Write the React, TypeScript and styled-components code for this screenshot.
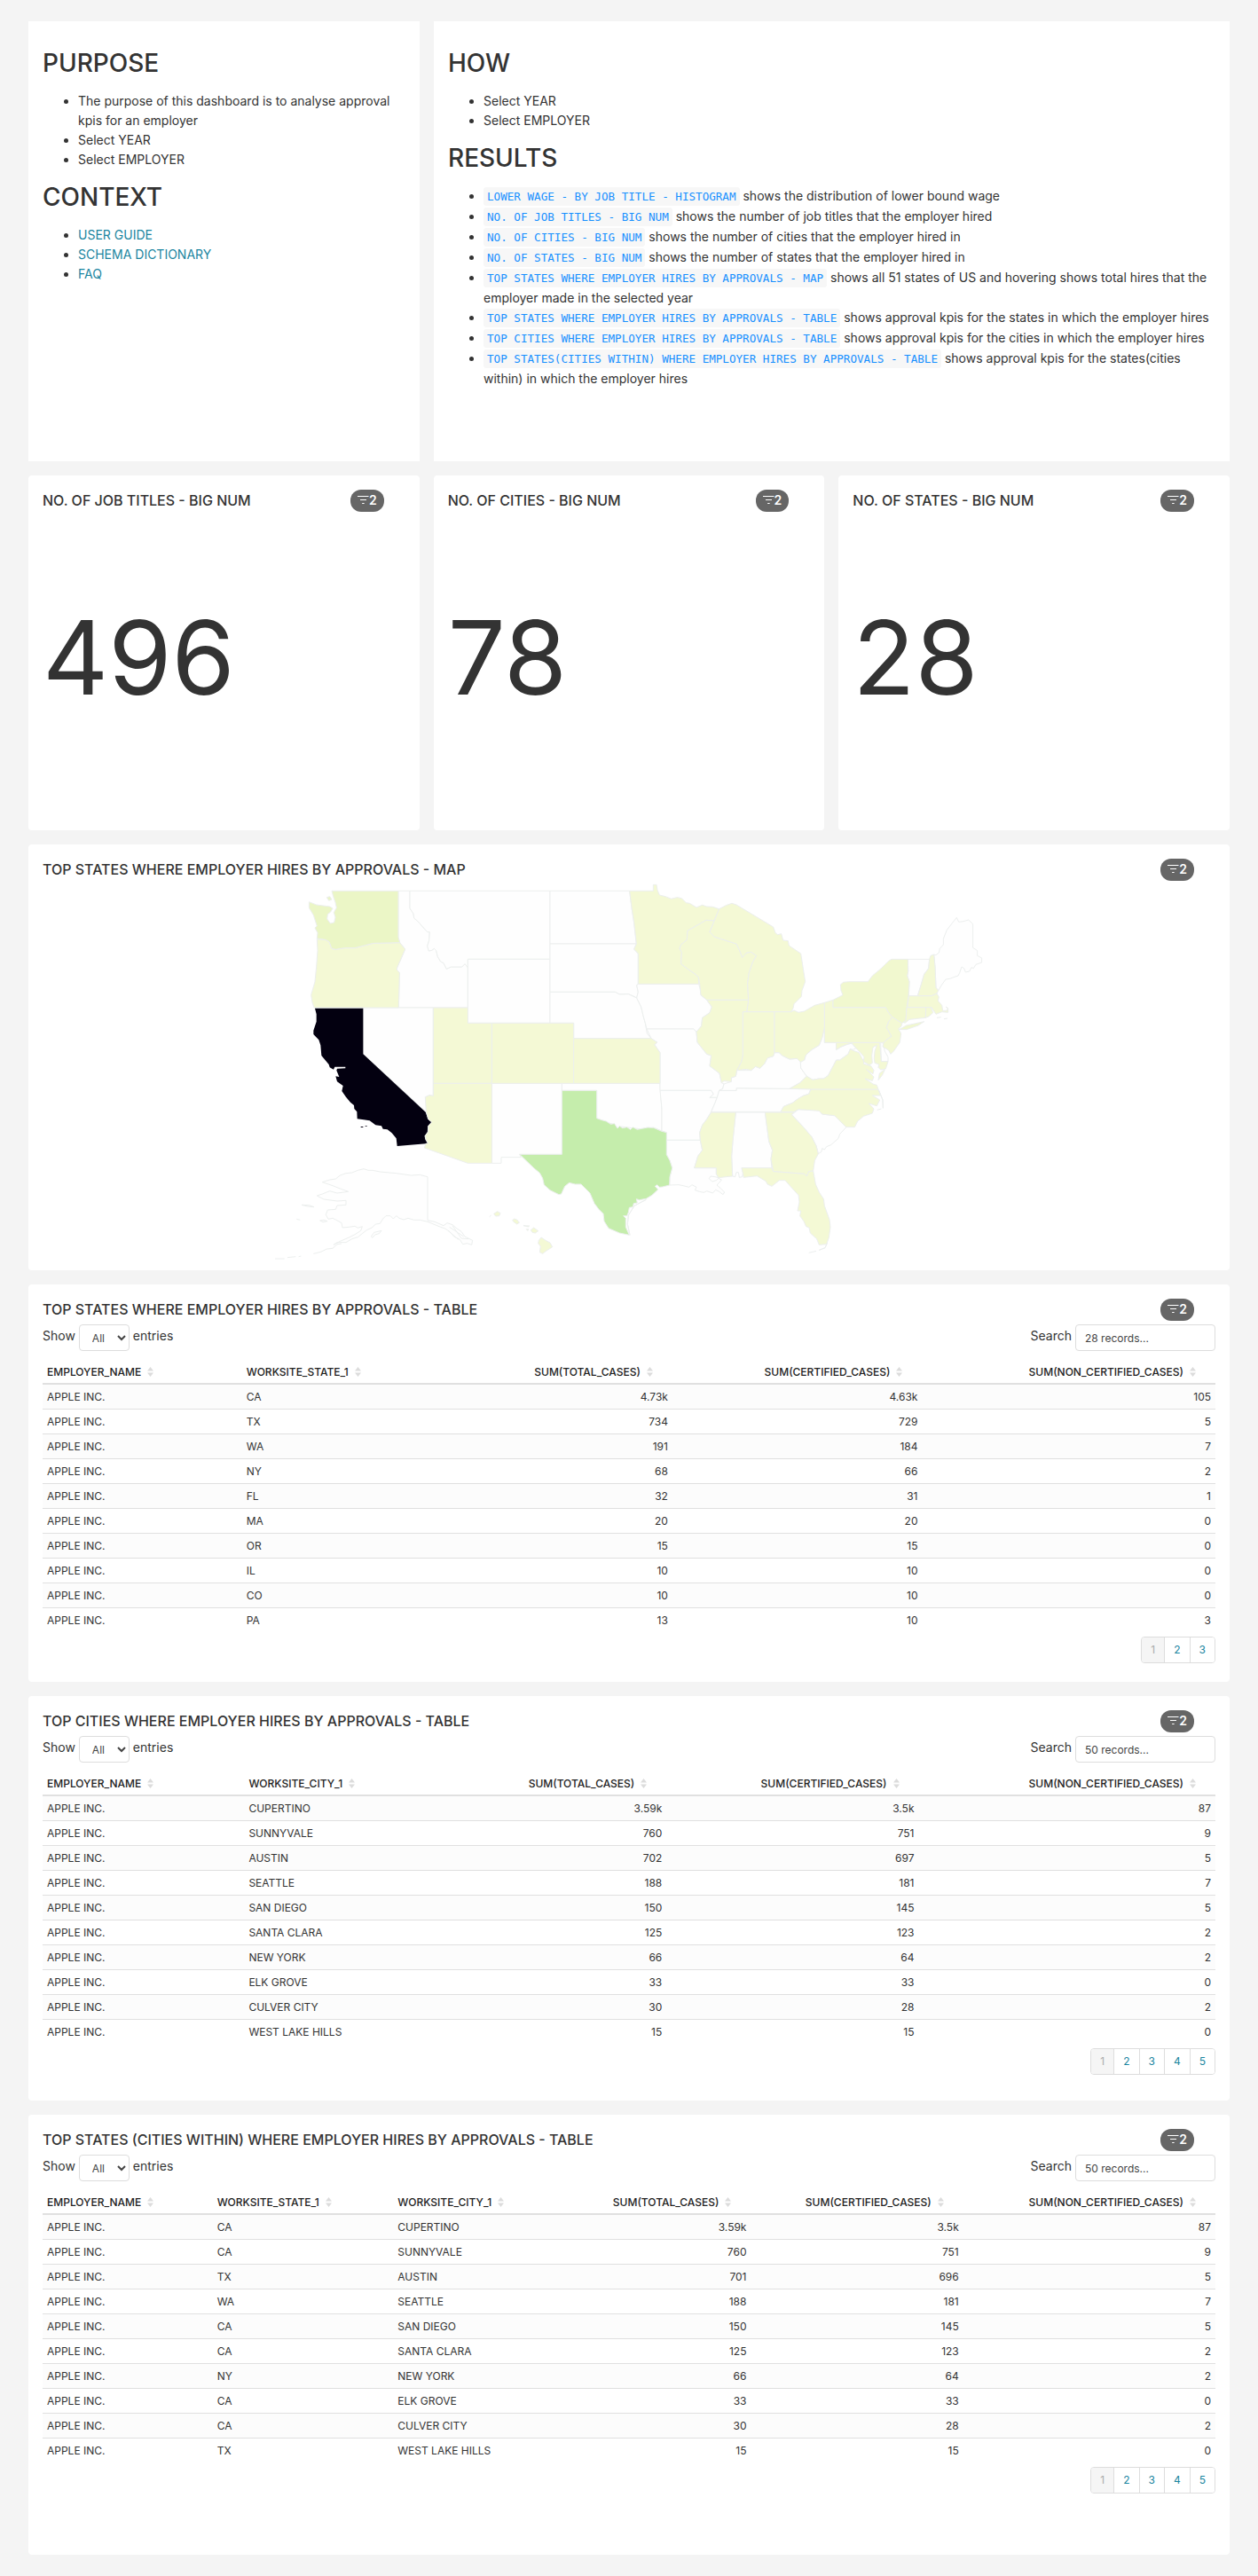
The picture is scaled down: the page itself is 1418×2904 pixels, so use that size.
import React from "react";
import styled, { createGlobalStyle } from "styled-components";

const GlobalStyle = createGlobalStyle`
  * { box-sizing: border-box; }
  body {
    margin: 0;
    background: #f4f4f4;
    color: #333;
    font-family: Inter, "Liberation Sans", sans-serif;
    font-size: 14px;
    line-height: 22px;
  }
`;

const Dashboard = styled.main`
  display: flex;
  flex-direction: column;
  gap: 16px;
  padding: 24px 32px;
`;

const Row = styled.div<{ $columns: string }>`
  display: grid;
  grid-template-columns: ${(p) => p.$columns};
  gap: 16px;
`;

const Card = styled.section<{ $minHeight: number }>`
  display: flex;
  flex-direction: column;
  min-width: 0;
  min-height: ${(p) => p.$minHeight}px;
  padding: 16px 16px 4px;
  background: #fff;
  border-radius: 4px;
`;

const MarkdownCard = styled(Card)`
  padding-top: 27px;
  border-radius: 0;
`;

const Heading = styled.h1`
  margin: 0 0 12px;
  font-size: 28px;
  font-weight: 500;
  line-height: 40px;
`;

const List = styled.ul`
  margin: 0 0 11px;
  padding-left: 40px;
`;

const Link = styled.a`
  color: #1a85a0;
  text-decoration: none;
`;

const Code = styled.code`
  padding: 3px 4px;
  border-radius: 3px;
  background: #f7f7f7;
  color: #1890ff;
  font-family: "DejaVu Sans Mono", "Liberation Mono", monospace;
  font-size: 90%;
`;

const CardHeader = styled.header`
  display: flex;
  align-items: flex-start;
  justify-content: space-between;
  height: 25px;
  padding-right: 24px;
`;

const Title = styled.h2`
  margin: 0;
  font-size: 16px;
  font-weight: 500;
  line-height: 24px;
`;

const Badge = styled.button`
  display: flex;
  align-items: center;
  height: 25px;
  padding: 0 8px 2px;
  border: 0;
  border-radius: 12px;
  background: #666;
  color: #fff;
  font: 600 14px/22px Inter, sans-serif;
`;

const BigNumber = styled.div`
  flex: 1;
  display: flex;
  align-items: center;
  padding-bottom: 26px;
  font-size: 115px;
  line-height: 120px;
`;

const MapDrawing = styled.svg`
  display: block;
  width: 100%;
  height: 430px;
  margin-top: 2px;
`;

const Controls = styled.div`
  display: flex;
  justify-content: space-between;
  margin-top: 4px;
  height: 30px;
`;

const ControlLabel = styled.label`
  display: flex;
  gap: 4px;
  line-height: 26px;
`;

const PageSize = styled.select`
  width: 57px;
  height: 30px;
  padding: 5px 0 5px 10px;
  border: 1px solid #ddd;
  border-radius: 4px;
  background: #fff;
  color: #444;
  font: 12px/18px Inter, sans-serif;
`;

const SearchBox = styled.input`
  width: 158px;
  height: 30px;
  padding: 5px 10px;
  border: 1px solid #ddd;
  border-radius: 4px;
  background: #fff;
  color: #444;
  font: 12px/18px Inter, sans-serif;
  &::placeholder { color: #444; }
`;

const Table = styled.table`
  width: 100%;
  margin-top: 10px;
  border-collapse: collapse;
  table-layout: fixed;
  font-size: 12px;
  line-height: 17px;
`;

const HeadCell = styled.th<{ $numeric: boolean }>`
  height: 27px;
  padding: 0 ${(p) => (p.$numeric ? 22 : 5)}px 0 5px;
  border-bottom: 2px solid #e0e0e0;
  text-align: ${(p) => (p.$numeric ? "right" : "left")};
  white-space: nowrap;
`;

const SortButton = styled.button`
  display: inline-flex;
  align-items: center;
  gap: 7px;
  padding: 0;
  border: 0;
  background: none;
  color: #222;
  font: 500 12px/17px Inter, sans-serif;
`;

const BodyRow = styled.tr`
  &:nth-child(odd) { background: #fcfcfc; }
  & + & > td { border-top: 1px solid #e0e0e0; }
`;

const Cell = styled.td<{ $numeric: boolean }>`
  height: 28px;
  padding: 0 5px;
  text-align: ${(p) => (p.$numeric ? "right" : "left")};
`;

const Pagination = styled.nav`
  display: flex;
  align-self: flex-end;
  margin-top: 5px;
  border: 1px solid #ddd;
  border-radius: 4px;
  overflow: hidden;
`;

const PageButton = styled.button`
  height: 28px;
  padding: 0 10px;
  border: 0;
  background: #fff;
  color: #1a85a0;
  font: 12px/18px Inter, sans-serif;
  & + & { border-left: 1px solid #ddd; }
  &:disabled { background: #f5f5f5; color: #aaa; }
`;

const FilterBadge = () => (
  <Badge type="button" aria-label="2 applied filters">
    <svg width="13" height="11" viewBox="0 0 13 11" stroke="#fff" fill="none" aria-hidden="true">
      <path d="M0 1.5h12.5M3 5.5h7M5.200 9.500h2.400" strokeWidth="1.2" />
    </svg>
    <span>2</span>
  </Badge>
);

const SortIcon = () => (
  <svg width="7" height="11" viewBox="0 0 7 11" fill="#dcdcdc" aria-hidden="true">
    <path d="M3.500 0L7 4.500H0zM3.500 11L7 6.500H0z" />
  </svg>
);

const ChartHeader = ({ title }: { title: string }) => (
  <CardHeader>
    <Title>{title}</Title>
    <FilterBadge />
  </CardHeader>
);

const LOW = "#f4f9d5";
const NONE = "#fefefe";

const states: { id: string; fill: string; d: string }[] = [
  { id: "ID", fill: NONE, d: "M447,193 L486,193 L486,252 L498,270 L500,285 L512,295 L530,315 L545,332 L553,332 L551,360 L545,380 L550,396 L560,394 L568,388 L575,395 L580,415 L590,432 L600,437 L610,457 L625,450 L662,450 L672,440 L682,452 L682,588 L448,588 L451,470 L442,460 L443,452 L455,425 L470,390 L452,368 L447,350 Z" },
  { id: "MT", fill: NONE, d: "M486,193 H960 V424 H682 V452 L672,440 L662,450 L625,450 L610,457 L600,437 L590,432 L580,415 L575,395 L568,388 L560,394 L550,396 L545,380 L551,360 L553,332 L545,332 L530,315 L512,295 L500,285 L498,270 L486,252 Z" },
  { id: "WY", fill: NONE, d: "M682,424 H960 V640 H682 Z" },
  { id: "ND", fill: NONE, d: "M960,193 H1229 L1236,250 L1244,300 L1252,372 H960 Z" },
  { id: "SD", fill: NONE, d: "M960,372 H1252 L1244,390 L1258,405 L1258,508 L1253,512 L1258,535 L1253,555 L1240,548 L1225,542 L1195,543 L1180,535 H960 Z" },
  { id: "NE", fill: NONE, d: "M960,535 H1180 L1195,543 L1225,542 L1253,555 L1268,585 L1275,615 L1282,640 L1288,675 L1302,692 H1040 V640 H960 Z" },
  { id: "NV", fill: NONE, d: "M328,588 H565 V886 L552,884 L540,890 L541,915 L542,942 L328,745 Z" },
  { id: "NM", fill: NONE, d: "M763,844 H1000 V1084 H857 L862,1094 H795 V1114 H763 Z" },
  { id: "OK", fill: NONE, d: "M1000,844 H1332 L1333,868 L1338,930 L1338,1005 L1310,993 L1285,998 L1262,998 L1240,995 L1200,990 L1190,996 L1172,982 L1150,975 L1118,962 V868 H1000 Z" },
  { id: "IA", fill: NONE, d: "M1258,508 H1463 L1468,525 L1470,545 L1490,562 L1507,585 L1500,605 L1475,622 L1472,650 L1455,670 L1445,660 H1287 L1282,640 L1275,615 L1268,585 L1253,555 L1258,535 L1253,512 Z" },
  { id: "MO", fill: NONE, d: "M1287,660 H1445 L1455,670 L1458,705 L1490,745 L1505,750 L1500,785 L1533,810 L1540,842 L1548,846 L1544,862 L1532,868 L1525,892 H1500 L1512,880 L1505,868 H1332 V740 L1313,713 L1322,705 L1302,692 Z" },
  { id: "AR", fill: NONE, d: "M1332,868 H1505 L1512,880 L1500,892 H1525 L1518,910 L1505,940 L1490,965 L1475,985 L1466,1010 L1468,1036 H1354 V1010 L1338,1005 L1338,930 Z" },
  { id: "LA", fill: NONE, d: "M1354,1036 H1468 L1475,1070 L1460,1090 L1448,1130 H1522 L1522,1150 L1530,1163 L1518,1160 L1503,1158 L1498,1166 L1508,1176 L1522,1172 L1530,1165 L1540,1170 L1532,1180 L1524,1188 L1536,1198 L1550,1212 L1545,1220 L1532,1210 L1520,1204 L1510,1215 L1490,1208 L1480,1213 L1465,1210 L1450,1205 L1455,1195 L1440,1187 L1430,1195 L1410,1190 L1395,1187 L1364,1188 L1365,1160 L1373,1130 L1365,1105 L1354,1085 Z" },
  { id: "AL", fill: NONE, d: "M1588,942 H1687 L1700,1040 L1712,1070 L1707,1100 L1710,1130 H1608 L1613,1145 L1610,1160 L1600,1162 L1597,1145 L1590,1145 L1586,1160 L1577,1158 L1574,1090 L1578,1040 Z" },
  { id: "TN", fill: NONE, d: "M1532,868 H1590 V860 L1770,862 H1842 L1835,880 L1818,885 L1800,895 L1780,910 L1750,922 L1740,940 H1505 L1518,910 L1525,892 Z" },
  { id: "KY", fill: NONE, d: "M1548,846 L1573,838 L1573,825 L1588,820 L1592,800 L1640,800 L1655,787 L1670,793 L1685,778 L1695,758 L1715,752 L1719,740 L1735,740 L1745,750 L1770,762 L1795,760 L1807,772 L1808,792 L1828,820 L1805,842 L1770,862 L1590,860 V868 H1532 L1544,862 Z" },
  { id: "WV", fill: NONE, d: "M1888,655 V706 H1928 V730 L1945,720 L1965,712 L1980,708 L1995,725 L1985,730 L1975,728 L1968,745 L1940,765 L1928,765 L1915,790 L1900,818 L1885,828 L1870,828 L1848,832 L1828,820 L1808,792 L1807,772 L1820,765 L1825,748 L1845,730 L1870,715 L1880,690 Z" },
  { id: "SC", fill: NONE, d: "M1777,950 L1800,932 L1870,935 L1880,948 L1922,953 L1962,992 L1940,1015 L1935,1030 L1910,1052 L1895,1058 L1888,1068 L1880,1064 L1878,1075 L1867,1082 L1860,1055 L1845,1025 L1815,990 Z" },
  { id: "VT", fill: NONE, d: "M2170,424 H2243 L2240,455 L2225,475 L2215,510 L2203,548 H2173 L2175,500 L2168,480 L2171,465 Z" },
  { id: "ME", fill: NONE, d: "M2258,408 L2265,410 L2275,402 L2278,388 L2290,375 L2290,355 L2302,325 L2320,302 L2335,283 L2342,298 L2358,296 L2375,291 L2390,305 V385 L2405,395 V412 L2420,420 V435 L2400,442 L2392,455 L2385,452 L2378,465 L2365,468 L2360,455 L2352,450 L2345,470 L2340,480 L2325,485 L2312,490 L2298,492 L2285,510 L2273,530 L2265,520 L2262,450 Z" },
  { id: "DE", fill: NONE, d: "M2078,706 L2085,706 L2092,735 L2103,755 L2103,770 H2080 Z" },
  { id: "AK", fill: NONE, d: "M190,1178 L215,1170 L235,1167 L250,1155 L270,1148 L290,1146 L310,1138 L330,1133 L345,1138 L360,1138 L385,1143 L440,1148 L490,1155 L520,1153 L546,1160 V1307 L570,1312 L600,1325 L612,1316 L630,1322 L645,1335 L660,1345 L672,1362 L698,1375 L695,1390 L680,1385 L665,1388 L655,1372 L635,1362 L620,1345 L605,1335 L590,1330 L546,1312 L520,1306 L500,1306 L480,1300 L465,1305 L450,1300 L440,1292 L430,1302 L420,1292 L405,1292 L395,1302 L385,1318 L370,1320 L358,1332 L340,1340 L325,1352 L310,1364 L290,1370 L270,1382 L240,1382 L228,1390 L250,1378 L280,1365 L300,1355 L320,1342 L325,1328 L310,1333 L300,1327 L280,1330 L258,1332 L255,1316 L235,1305 L225,1300 L210,1303 L202,1288 L208,1272 L235,1270 L240,1257 L270,1255 L270,1240 L240,1242 L195,1236 L172,1224 L190,1218 L215,1208 L240,1215 L278,1210 L250,1200 L225,1190 Z M120,1255 L145,1256 L162,1262 L140,1260 Z M182,1308 L195,1306 L207,1310 L192,1313 Z M103,1303 L115,1306 M30,1437 H62 M72,1433 L100,1430 M110,1430 L118,1428 M160,1420 L185,1414 L205,1404 L225,1402 L240,1388 L255,1386 M355,1362 L365,1348 L390,1342 L382,1352 L368,1356 L360,1366 Z M620,1330 L650,1350 L668,1362 M615,1342 L650,1372 M630,1325 L660,1368 L685,1370" },
  { id: "OR", fill: LOW, d: "M172,356 L200,358 L213,365 L222,388 L235,391 L265,386 L300,386 L335,377 L362,370 L452,368 L470,390 L455,425 L443,452 L442,460 L451,470 L448,588 L162,588 L156,570 L152,545 L165,500 L170,450 L174,395 Z" },
  { id: "WA", fill: "#ebf6c6", d: "M222,193 H447 V350 L452,368 L362,370 L335,377 L300,386 L265,386 L235,391 L222,388 L213,365 L200,358 L172,354 L174,335 L165,318 L172,312 L160,275 L145,250 L145,230 L170,240 L215,246 L225,252 L218,264 L208,272 L206,288 L217,303 L230,300 L234,282 L229,266 L238,250 L234,232 L228,215 Z M205,215 L215,212 L222,222 L212,226 Z" },
  { id: "CA", fill: "#030010", d: "M165,590 H328 V745 L540,942 L548,965 L560,975 L548,988 L547,1008 L537,1022 L540,1035 L547,1046 L540,1048 L443,1056 L440,1030 L425,1012 L410,1000 L395,998 L390,988 L370,985 L350,970 L330,967 L308,964 L307,940 L298,930 L297,918 L285,908 L270,890 L256,870 L260,852 L240,838 L235,820 L247,822 L238,800 L240,794 L268,793 L268,788 L232,788 L228,797 L215,790 L212,780 L187,750 L184,715 L178,697 L160,678 L160,665 L170,635 L170,610 Z M320,990 h8 v3 h-8 Z M335,988 h6 v2 h-6 Z M388,1016 l6,4 M386,1036 l6,8" },
  { id: "UT", fill: LOW, d: "M565,588 H682 V640 H763 V844 H565 Z" },
  { id: "AZ", fill: LOW, d: "M565,844 H763 V1114 H682 L535,1062 L540,1048 L547,1046 L540,1035 L537,1022 L547,1008 L548,988 L560,975 L548,965 L541,940 L538,890 L552,884 L565,886 Z" },
  { id: "CO", fill: LOW, d: "M763,640 H1040 V844 H763 Z" },
  { id: "KS", fill: LOW, d: "M1040,692 H1302 L1322,705 L1313,713 L1332,740 V844 H1040 Z" },
  { id: "MN", fill: LOW, d: "M1229,193 H1309 V172 H1320 L1323,190 L1330,207 L1350,212 L1370,220 L1390,215 L1405,218 L1420,233 L1432,235 L1455,249 L1475,241 L1490,246 L1510,247 L1532,254 L1515,294 L1488,292 L1460,308 L1425,328 L1423,358 L1403,375 L1398,388 L1405,400 L1403,440 L1430,460 L1452,475 L1462,485 L1463,508 H1258 V405 L1244,390 L1252,372 L1244,300 L1236,250 Z" },
  { id: "WI", fill: LOW, d: "M1425,328 L1460,308 L1488,292 L1515,294 L1500,332 L1515,348 L1590,372 L1600,392 L1610,418 L1625,402 L1640,400 L1658,412 L1645,435 L1633,470 L1628,505 L1631,562 H1490 L1470,545 L1466,508 L1462,485 L1452,475 L1430,460 L1403,440 L1405,400 L1398,388 L1403,375 L1423,358 Z" },
  { id: "MI", fill: LOW, d: "M1532,254 L1555,242 L1575,235 L1590,240 L1715,315 L1722,335 L1730,341 L1742,338 L1748,360 L1765,362 L1768,378 L1808,405 L1815,450 L1823,500 L1812,530 L1810,550 L1785,575 L1782,590 L1775,602 H1625 L1631,562 L1628,505 L1633,470 L1645,435 L1658,412 L1640,400 L1625,402 L1610,418 L1600,392 L1590,372 L1515,348 L1500,332 Z" },
  { id: "IL", fill: LOW, d: "M1490,562 H1631 L1625,602 H1612 V750 L1607,772 L1592,800 L1588,820 L1573,825 L1573,838 L1548,836 L1540,842 L1533,810 L1500,785 L1505,750 L1490,745 L1458,705 L1455,670 L1472,650 L1475,622 L1500,605 L1507,585 Z" },
  { id: "IN", fill: LOW, d: "M1612,602 H1719 V740 L1715,752 L1695,758 L1685,778 L1670,793 L1655,787 L1640,800 L1625,796 L1592,800 L1607,772 L1612,750 Z" },
  { id: "OH", fill: LOW, d: "M1719,602 H1775 L1785,597 L1800,604 L1820,600 L1855,580 L1888,571 V655 L1880,690 L1870,715 L1845,730 L1825,748 L1820,765 L1807,772 L1795,760 L1770,762 L1745,750 L1735,740 H1719 Z" },
  { id: "MS", fill: LOW, d: "M1505,942 H1588 L1578,1040 L1574,1090 L1577,1158 L1555,1160 L1530,1163 L1522,1150 V1130 H1448 L1460,1090 L1475,1070 L1468,1036 L1466,1010 L1475,985 L1490,965 Z" },
  { id: "GA", fill: LOW, d: "M1687,942 H1785 L1777,950 L1815,990 L1845,1025 L1860,1055 L1867,1082 L1855,1105 L1850,1140 L1835,1142 L1828,1158 L1820,1150 L1715,1142 L1707,1100 L1712,1070 L1700,1040 Z" },
  { id: "FL", fill: LOW, d: "M1608,1130 H1710 L1715,1142 L1820,1150 L1828,1158 L1835,1142 L1850,1140 L1858,1185 L1870,1212 L1885,1235 L1888,1258 L1905,1305 L1908,1330 L1903,1365 L1895,1388 L1870,1390 L1862,1370 L1840,1350 L1836,1332 L1826,1328 L1818,1310 L1805,1292 L1808,1275 L1797,1275 L1803,1245 L1800,1222 L1780,1200 L1755,1172 L1735,1172 L1710,1192 L1695,1185 L1690,1175 L1660,1157 L1615,1162 Z M1897,1385 L1890,1400 L1870,1408 L1890,1400 Z M1860,1411 L1835,1417" },
  { id: "NC", fill: LOW, d: "M1842,864 H2070 L2078,885 L2050,885 L2075,900 L2065,920 L2038,912 L2055,930 L2050,945 L2020,955 L2000,972 L1990,992 H1962 L1922,953 L1880,948 L1870,937 L1800,932 L1785,940 H1740 L1750,922 L1780,910 L1800,895 L1818,885 L1835,880 Z M2072,868 L2085,900 L2086,928 L2085,900 Z M2080,930 L2066,934" },
  { id: "VA", fill: LOW, d: "M1770,862 L1805,842 L1828,820 L1848,832 L1870,828 L1885,828 L1900,818 L1915,790 L1928,765 L1940,765 L1968,745 L1975,728 L1985,733 L2005,740 L2015,760 L2022,770 L2020,778 L2045,785 L2055,800 L2052,812 L2030,797 L2055,822 L2050,835 L2025,828 L2052,846 L2065,850 L2070,864 H1842 Z M2070,833 L2074,810 L2092,797 L2084,815 Z" },
  { id: "MD", fill: LOW, d: "M1928,706 H2075 L2080,770 H2103 L2095,795 L2078,798 L2070,790 L2072,780 L2058,775 L2056,760 L2058,735 L2065,715 L2052,722 L2048,750 L2050,775 L2040,782 L2020,770 L2022,755 L2010,740 L1995,725 L1980,708 L1965,712 L1945,720 L1928,730 Z" },
  { id: "PA", fill: LOW, d: "M1888,571 L1917,562 V587 H2095 L2105,605 L2118,620 L2105,635 L2098,655 L2115,685 L2100,695 L2088,706 H1888 Z" },
  { id: "NJ", fill: LOW, d: "M2118,620 L2150,640 L2148,650 L2138,660 L2147,675 L2143,705 L2122,735 L2112,745 L2105,732 L2085,720 L2088,706 L2100,695 L2115,685 L2098,655 L2105,635 Z" },
  { id: "NY", fill: "#f1f8cf", d: "M1917,562 L1950,545 L1944,530 L1942,510 L1952,502 L1970,500 H2035 L2050,480 L2080,455 L2105,430 L2115,424 H2170 L2171,465 L2168,480 L2175,500 L2172,550 L2166,590 L2163,632 L2155,638 L2150,640 L2118,620 L2105,605 L2095,587 H1917 Z M2140,662 L2165,648 L2225,635 L2205,648 L2165,662 Z" },
  { id: "NH", fill: LOW, d: "M2243,424 L2247,412 L2258,408 L2262,450 L2265,520 L2273,530 L2268,540 L2250,548 H2203 L2215,510 L2225,475 L2240,455 Z" },
  { id: "MA", fill: LOW, d: "M2173,548 H2250 L2268,540 L2275,552 L2272,565 L2285,580 L2288,598 L2300,598 L2305,592 L2299,585 L2306,590 L2306,604 L2285,602 L2265,610 L2250,587 H2168 Z M2268,622 L2282,620 M2292,626 L2304,624" },
  { id: "CT", fill: LOW, d: "M2166,587 H2231 L2230,622 L2175,628 L2160,640 L2155,636 L2163,632 Z" },
  { id: "RI", fill: LOW, d: "M2231,587 H2248 L2255,605 L2240,618 L2230,622 Z" },
  { id: "HI", fill: LOW, d: "M922,1375 L930,1365 L945,1375 L960,1383 L968,1397 L945,1412 L935,1420 L925,1415 L928,1395 L920,1385 Z M770,1285 L782,1277 L792,1283 L788,1292 L776,1293 Z M833,1308 L838,1302 L848,1305 L856,1315 L848,1320 L838,1313 Z M870,1325 L890,1326 L886,1329 Z M895,1340 L905,1332 L920,1343 L910,1350 L900,1348 Z M880,1337 L888,1338 L884,1342 Z M755,1295 L761,1290" },
  { id: "TX", fill: "#c5edac", d: "M1000,868 H1118 V962 L1135,968 L1150,972 L1165,982 L1178,980 L1188,996 L1195,988 L1205,995 L1220,992 L1232,1000 L1240,992 L1255,1000 L1270,997 L1290,993 L1310,994 L1338,1006 L1354,1010 V1085 L1365,1105 L1373,1130 L1365,1160 L1364,1188 L1340,1194 L1330,1195 L1322,1187 L1315,1192 L1325,1203 L1305,1222 L1285,1234 L1262,1238 L1252,1235 L1255,1248 L1243,1250 L1240,1262 L1228,1264 L1225,1280 L1220,1292 L1208,1292 L1216,1300 L1216,1330 L1228,1357 L1195,1350 L1158,1334 L1143,1310 L1140,1285 L1125,1270 L1110,1250 L1095,1215 L1065,1185 L1045,1185 L1025,1180 L1010,1192 L998,1218 L990,1220 L960,1205 L940,1187 L935,1165 L925,1147 L905,1130 L857,1084 H1000 Z M1230,1357 L1222,1320 L1225,1290 L1245,1258 L1285,1237 L1245,1258 L1225,1290 L1222,1320 Z" },
];

const StatesMap = () => (
  <MapDrawing viewBox="0 165 2454 1290" role="img" aria-label="Hires by state">
    {states.map((s) => (
      <path key={s.id} d={s.d} fill={s.fill} stroke={s.id === "CA" ? "none" : "#ecefee"} strokeWidth="3" strokeLinejoin="round" />
    ))}
  </MapDrawing>
);

type TableProps = {
  id: string;
  title: string;
  records: number;
  pages: number;
  minHeight: number;
  columns: { name: string; width: string; numeric?: boolean }[];
  rows: string[][];
};

const TableCard = ({ id, title, records, pages, minHeight, columns, rows }: TableProps) => (
  <Card $minHeight={minHeight}>
    <ChartHeader title={title} />
    <Controls>
      <ControlLabel htmlFor={`${id}-size`}>
        <span>Show</span>
        <PageSize id={`${id}-size`}>
          <option>All</option>
        </PageSize>
        <span>entries</span>
      </ControlLabel>
      <ControlLabel htmlFor={`${id}-search`}>
        <span>Search</span>
        <SearchBox id={`${id}-search`} placeholder={`${records} records...`} />
      </ControlLabel>
    </Controls>
    <Table>
      <colgroup>
        {columns.map((c) => (
          <col key={c.name} style={{ width: c.width }} />
        ))}
      </colgroup>
      <thead>
        <tr>
          {columns.map((c) => (
            <HeadCell key={c.name} $numeric={!!c.numeric} scope="col">
              <SortButton type="button">
                {c.name}
                <SortIcon />
              </SortButton>
            </HeadCell>
          ))}
        </tr>
      </thead>
      <tbody>
        {rows.map((row, i) => (
          <BodyRow key={i}>
            {row.map((value, j) => (
              <Cell key={j} $numeric={!!columns[j].numeric}>
                {value}
              </Cell>
            ))}
          </BodyRow>
        ))}
      </tbody>
    </Table>
    <Pagination aria-label={`${title} pages`}>
      {Array.from({ length: pages }, (_, i) => (
        <PageButton key={i} type="button" disabled={i === 0}>
          {i + 1}
        </PageButton>
      ))}
    </Pagination>
  </Card>
);

const EMPLOYER = "APPLE INC.";

const stateRows = [
  ["CA", "4.73k", "4.63k", "105"],
  ["TX", "734", "729", "5"],
  ["WA", "191", "184", "7"],
  ["NY", "68", "66", "2"],
  ["FL", "32", "31", "1"],
  ["MA", "20", "20", "0"],
  ["OR", "15", "15", "0"],
  ["IL", "10", "10", "0"],
  ["CO", "10", "10", "0"],
  ["PA", "13", "10", "3"],
].map((r) => [EMPLOYER, ...r]);

const cityRows = [
  ["CUPERTINO", "3.59k", "3.5k", "87"],
  ["SUNNYVALE", "760", "751", "9"],
  ["AUSTIN", "702", "697", "5"],
  ["SEATTLE", "188", "181", "7"],
  ["SAN DIEGO", "150", "145", "5"],
  ["SANTA CLARA", "125", "123", "2"],
  ["NEW YORK", "66", "64", "2"],
  ["ELK GROVE", "33", "33", "0"],
  ["CULVER CITY", "30", "28", "2"],
  ["WEST LAKE HILLS", "15", "15", "0"],
].map((r) => [EMPLOYER, ...r]);

const stateCityRows = [
  ["CA", "CUPERTINO", "3.59k", "3.5k", "87"],
  ["CA", "SUNNYVALE", "760", "751", "9"],
  ["TX", "AUSTIN", "701", "696", "5"],
  ["WA", "SEATTLE", "188", "181", "7"],
  ["CA", "SAN DIEGO", "150", "145", "5"],
  ["CA", "SANTA CLARA", "125", "123", "2"],
  ["NY", "NEW YORK", "66", "64", "2"],
  ["CA", "ELK GROVE", "33", "33", "0"],
  ["CA", "CULVER CITY", "30", "28", "2"],
  ["TX", "WEST LAKE HILLS", "15", "15", "0"],
].map((r) => [EMPLOYER, ...r]);

const results: [string, string][] = [
  ["LOWER WAGE - BY JOB TITLE - HISTOGRAM", "shows the distribution of lower bound wage"],
  ["NO. OF JOB TITLES - BIG NUM", "shows the number of job titles that the employer hired"],
  ["NO. OF CITIES - BIG NUM", "shows the number of cities that the employer hired in"],
  ["NO. OF STATES - BIG NUM", "shows the number of states that the employer hired in"],
  ["TOP STATES WHERE EMPLOYER HIRES BY APPROVALS - MAP", "shows all 51 states of US and hovering shows total hires that the employer made in the selected year"],
  ["TOP STATES WHERE EMPLOYER HIRES BY APPROVALS - TABLE", "shows approval kpis for the states in which the employer hires"],
  ["TOP CITIES WHERE EMPLOYER HIRES BY APPROVALS - TABLE", "shows approval kpis for the cities in which the employer hires"],
  ["TOP STATES(CITIES WITHIN) WHERE EMPLOYER HIRES BY APPROVALS - TABLE", "shows approval kpis for the states(cities within) in which the employer hires"],
];

const bigNumbers: [string, string][] = [
  ["NO. OF JOB TITLES - BIG NUM", "496"],
  ["NO. OF CITIES - BIG NUM", "78"],
  ["NO. OF STATES - BIG NUM", "28"],
];

export default function App() {
  return (
    <Dashboard>
      <GlobalStyle />
      <Row $columns="441fr 897fr">
        <MarkdownCard $minHeight={496}>
          <Heading>PURPOSE</Heading>
          <List>
            <li>The purpose of this dashboard is to analyse approval kpis for an employer</li>
            <li>Select YEAR</li>
            <li>Select EMPLOYER</li>
          </List>
          <Heading>CONTEXT</Heading>
          <List>
            <li><Link href="#user-guide">USER GUIDE</Link></li>
            <li><Link href="#schema-dictionary">SCHEMA DICTIONARY</Link></li>
            <li><Link href="#faq">FAQ</Link></li>
          </List>
        </MarkdownCard>
        <MarkdownCard $minHeight={496}>
          <Heading>HOW</Heading>
          <List>
            <li>Select YEAR</li>
            <li>Select EMPLOYER</li>
          </List>
          <Heading>RESULTS</Heading>
          <List>
            {results.map(([name, text]) => (
              <li key={name}>
                <Code>{name}</Code> {text}
              </li>
            ))}
          </List>
        </MarkdownCard>
      </Row>
      <Row $columns="repeat(3, 1fr)">
        {bigNumbers.map(([title, value]) => (
          <Card key={title} $minHeight={400}>
            <ChartHeader title={title} />
            <BigNumber>{value}</BigNumber>
          </Card>
        ))}
      </Row>
      <Card $minHeight={480}>
        <ChartHeader title="TOP STATES WHERE EMPLOYER HIRES BY APPROVALS - MAP" />
        <StatesMap />
      </Card>
      <TableCard
        id="states"
        title="TOP STATES WHERE EMPLOYER HIRES BY APPROVALS - TABLE"
        records={28}
        pages={3}
        minHeight={448}
        columns={[
          { name: "EMPLOYER_NAME", width: "17%" },
          { name: "WORKSITE_STATE_1", width: "17.7%" },
          { name: "SUM(TOTAL_CASES)", width: "19%", numeric: true },
          { name: "SUM(CERTIFIED_CASES)", width: "21.3%", numeric: true },
          { name: "SUM(NON_CERTIFIED_CASES)", width: "25%", numeric: true },
        ]}
        rows={stateRows}
      />
      <TableCard
        id="cities"
        title="TOP CITIES WHERE EMPLOYER HIRES BY APPROVALS - TABLE"
        records={50}
        pages={5}
        minHeight={456}
        columns={[
          { name: "EMPLOYER_NAME", width: "17.2%" },
          { name: "WORKSITE_CITY_1", width: "17%" },
          { name: "SUM(TOTAL_CASES)", width: "19%", numeric: true },
          { name: "SUM(CERTIFIED_CASES)", width: "21.5%", numeric: true },
          { name: "SUM(NON_CERTIFIED_CASES)", width: "25.3%", numeric: true },
        ]}
        rows={cityRows}
      />
      <TableCard
        id="state-cities"
        title="TOP STATES (CITIES WITHIN) WHERE EMPLOYER HIRES BY APPROVALS - TABLE"
        records={50}
        pages={5}
        minHeight={496}
        columns={[
          { name: "EMPLOYER_NAME", width: "14.5%" },
          { name: "WORKSITE_STATE_1", width: "15.4%" },
          { name: "WORKSITE_CITY_1", width: "14.5%" },
          { name: "SUM(TOTAL_CASES)", width: "16%", numeric: true },
          { name: "SUM(CERTIFIED_CASES)", width: "18.1%", numeric: true },
          { name: "SUM(NON_CERTIFIED_CASES)", width: "21.5%", numeric: true },
        ]}
        rows={stateCityRows}
      />
    </Dashboard>
  );
}
